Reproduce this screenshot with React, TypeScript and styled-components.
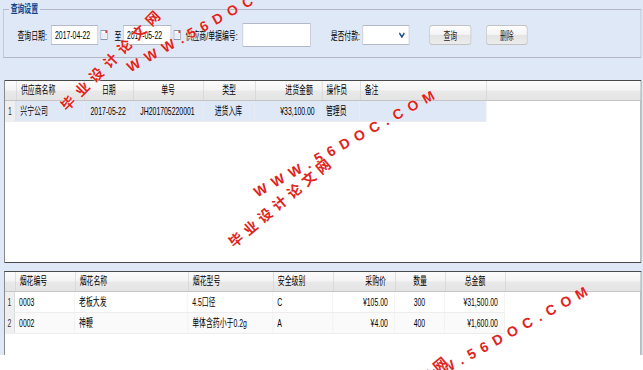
import React from 'react';
import styled, { createGlobalStyle } from 'styled-components';

// the source screenshot is squeezed horizontally, so the page is laid out
// at 1.6x width and squeezed back by the stage transform
const SQUEEZE = 0.625;

type Col = { title: string; w: number; align: 'left' | 'center' | 'right'; hAlign?: 'left' | 'center' | 'right' };

const topCols: Col[] = [
  { title: '供应商名称', w: 109, align: 'left' },
  { title: '日期', w: 78, align: 'center' },
  { title: '单号', w: 112, align: 'center' },
  { title: '类型', w: 83, align: 'center' },
  { title: '进货金额', w: 107, align: 'right' },
  { title: '操作员', w: 61, align: 'left' },
  { title: '备注', w: 202, align: 'left' },
];

const topRows = [['兴宁公司', '2017-05-22', 'JH201705220001', '进货入库', '¥33,100.00', '管理员', '']];

const bottomCols: Col[] = [
  { title: '烟花编号', w: 96, align: 'left' },
  { title: '烟花名称', w: 181, align: 'left' },
  { title: '烟花型号', w: 136, align: 'left' },
  { title: '安全级别', w: 96, align: 'left' },
  { title: '采购价', w: 99, align: 'right' },
  { title: '数量', w: 80, align: 'center' },
  { title: '总金额', w: 96, align: 'right', hAlign: 'center' },
];

const bottomRows = [
  ['0003', '老板大发', '4.5口径', 'C', '¥105.00', '300', '¥31,500.00'],
  ['0002', '神鞭', '单体含药小于0.2g', 'A', '¥4.00', '400', '¥1,600.00'],
];

const GlobalStyle = createGlobalStyle`
  html, body {
    margin: 0;
    padding: 0;
    background: #fff;
    overflow: hidden;
  }
  body {
    font-family: "Liberation Sans", "Noto Sans CJK SC", sans-serif;
    font-size: 11px;
    color: #000;
  }
`;

const Page = styled.div`
  position: relative;
  width: 643px;
  height: 370px;
  overflow: hidden;
`;

const Stage = styled.div`
  width: 1029px;
  height: 355px;
  box-sizing: border-box;
  padding: 3px 3px 0 5px;
  background: #dfe8f6;
  transform: scaleX(${SQUEEZE});
  transform-origin: 0 0;
  display: flex;
  flex-direction: column;
`;

const QueryBox = styled.fieldset`
  margin: 0;
  padding: 8px 0 10px 0;
  min-width: 0;
  border: 1px solid #b5b8c8;
  border-left-width: 1.6px;
  border-right-width: 1.6px;
`;

const Legend = styled.legend`
  margin-left: 8px;
  padding: 0 3px;
  font-size: 11px;
  line-height: 12px;
  font-weight: bold;
  color: #15428b;
`;

const QueryRow = styled.div`
  display: flex;
  align-items: center;
  height: 24px;
  padding-left: 22px;
`;

const Label = styled.span<{ $w: number; $ml?: number }>`
  flex: none;
  width: ${p => p.$w}px;
  margin-left: ${p => p.$ml || 0}px;
  white-space: nowrap;
  color: #000;
`;

const FieldBox = styled.div<{ $w: number; $h?: number }>`
  flex: none;
  box-sizing: border-box;
  width: ${p => p.$w}px;
  height: ${p => p.$h || 20}px;
  background: #fff;
  border: 1px solid #b5b8c8;
  border-left-width: 1.6px;
  border-right-width: 1.6px;
  padding-left: 5px;
  line-height: ${p => (p.$h || 20) - 2}px;
  white-space: nowrap;
  overflow: hidden;
`;

const Trigger = styled.div`
  flex: none;
  width: 18px;
  height: 20px;
  display: flex;
  align-items: center;
  justify-content: center;
`;

const SelectBox = styled(FieldBox)`
  display: flex;
  align-items: center;
  justify-content: flex-end;
  padding-right: 6px;
`;

const Button = styled.button<{ $w: number; $ml: number }>`
  flex: none;
  width: ${p => p.$w}px;
  height: 20px;
  margin-left: ${p => p.$ml}px;
  padding: 0;
  font: inherit;
  color: #222;
  border: 1px solid #c2c2c2;
  border-left-width: 1.6px;
  border-right-width: 1.6px;
  border-radius: 5px / 3px;
  background: linear-gradient(to bottom, #fefefe 0%, #f3f3f3 50%, #e4e4e4 51%, #ececec 100%);
`;

const Grid = styled.div<{ $h?: number }>`
  margin: ${p => (p.$h ? '22px' : '8px')} 0 0 1.5px;
  ${p => (p.$h ? `height: ${p.$h}px;` : 'flex: 1;')}
  box-sizing: border-box;
  background: #fff;
  border: 1px solid #4a4a4a;
  border-left-width: 1.6px;
  border-right-width: 1.6px;
  ${p => (p.$h ? '' : 'border-bottom: none;')}
  display: flex;
  flex-direction: column;
  overflow: hidden;
`;

const HeaderRow = styled.div`
  flex: none;
  display: flex;
  height: 19px;
  border-bottom: 1px solid #c5c5c5;
  background: linear-gradient(to bottom, #fbfbfb 0%, #f4f4f4 48%, #e9e9e9 52%, #e4e4e4 100%);
`;

const HeaderCell = styled.div<{ $w?: number; $align?: string }>`
  ${p => (p.$w ? `width: ${p.$w}px; flex: none;` : 'flex: 1;')}
  box-sizing: border-box;
  padding: 0 ${p => (p.$align === 'right' ? 14 : 7)}px;
  text-align: ${p => p.$align || 'left'};
  line-height: 19px;
  white-space: nowrap;
  overflow: hidden;
  border-right: ${p => (p.$w ? '1.6px solid #d0d0d0' : 'none')};
`;

const NumHeader = styled.div<{ $w: number }>`
  flex: none;
  width: ${p => p.$w}px;
  border-right: 1.6px solid #d0d0d0;
`;

const Row = styled.div<{ $bg: string }>`
  flex: none;
  display: flex;
  align-self: flex-start;
  height: 21px;
  box-sizing: border-box;
  border-bottom: 1px solid #ededed;
  background: ${p => p.$bg};
`;

const NumCell = styled.div<{ $w: number }>`
  flex: none;
  width: ${p => p.$w}px;
  box-sizing: border-box;
  text-align: center;
  line-height: 20px;
  color: #333;
  background: #efefef;
  border-right: 1.6px solid #d0d0d0;
`;

const Cell = styled.div<{ $w: number; $align: string }>`
  flex: none;
  width: ${p => p.$w}px;
  box-sizing: border-box;
  padding: 0 ${p => (p.$align === 'right' ? 10 : 7)}px;
  text-align: ${p => p.$align};
  line-height: 20px;
  white-space: nowrap;
  overflow: hidden;
  border-right: 1.6px solid #ededed;
`;

const Marks = styled.div`
  position: absolute;
  inset: 0;
  pointer-events: none;
`;

const Mark = styled.div<{ $x: number; $y: number; $r: number; $size: number; $sp: number }>`
  position: absolute;
  left: ${p => p.$x}px;
  top: ${p => p.$y}px;
  transform: translate(-50%, -50%) rotate(${p => p.$r}deg);
  white-space: nowrap;
  font-family: "Liberation Sans", "Noto Sans CJK SC", sans-serif;
  font-weight: bold;
  font-size: ${p => p.$size}px;
  letter-spacing: ${p => p.$sp}px;
  color: #e0241c;
  text-shadow: 0 0 1px #fff, 0 0 1px #fff;
`;

const CalendarIcon = () => (
  <svg width="13" height="10" viewBox="0 0 13 10">
    <rect x="1.5" y="0.5" width="10" height="9" fill="#fff" stroke="#8894aa" />
    <rect x="2.5" y="3" width="8" height="5.5" fill="#e8edf5" />
    <rect x="8.5" y="0.5" width="3" height="2.5" fill="#d8453a" />
  </svg>
);

const Chevron = () => (
  <svg width="10" height="6" viewBox="0 0 10 6">
    <path d="M1 1 L5 5 L9 1" fill="none" stroke="#1f4e8c" strokeWidth="2" />
  </svg>
);

const DataGrid = ({ cols, rows, numW, h, rowBg }: { cols: Col[]; rows: string[][]; numW: number; h?: number; rowBg: (i: number) => string }) => (
  <Grid $h={h}>
    <HeaderRow>
      <NumHeader $w={numW} />
      {cols.map(c => (
        <HeaderCell key={c.title} $w={c.w} $align={c.hAlign || c.align}>
          {c.title}
        </HeaderCell>
      ))}
      <HeaderCell />
    </HeaderRow>
    {rows.map((r, i) => (
      <Row key={i} $bg={rowBg(i)}>
        <NumCell $w={numW}>{i + 1}</NumCell>
        {cols.map((c, j) => (
          <Cell key={j} $w={c.w} $align={c.align}>
            {r[j]}
          </Cell>
        ))}
      </Row>
    ))}
  </Grid>
);

const App = () => {
  return (
    <Page>
      <GlobalStyle />
      <Stage>
        <QueryBox>
          <Legend>查询设置</Legend>
          <QueryRow>
            <Label $w={54}>查询日期:</Label>
            <FieldBox $w={75}>2017-04-22</FieldBox>
            <Trigger><CalendarIcon /></Trigger>
            <Label $w={14} $ml={8}>至</Label>
            <FieldBox $w={77}>2017-05-22</FieldBox>
            <Trigger><CalendarIcon /></Trigger>
            <Label $w={91} $ml={5}>供应商/单据编号:</Label>
            <FieldBox $w={109} $h={24} />
            <Label $w={51} $ml={32}>是否付款:</Label>
            <SelectBox $w={75}><Chevron /></SelectBox>
            <Button $w={67} $ml={32}>查询</Button>
            <Button $w={66} $ml={24}>删除</Button>
          </QueryRow>
        </QueryBox>
        <DataGrid cols={topCols} rows={topRows} numW={18} h={183} rowBg={() => '#dfe8f6'} />
        <DataGrid cols={bottomCols} rows={bottomRows} numW={16} rowBg={i => (i % 2 ? '#fafafa' : '#fff')} />
      </Stage>
      <Marks>
        <Mark $x={112} $y={58} $r={-45} $size={14} $sp={6}>毕业设计论文网</Mark>
        <Mark $x={220} $y={17} $r={-29} $size={14} $sp={6.5}>WWW.56DOC.COM</Mark>
        <Mark $x={347} $y={142} $r={-29} $size={14} $sp={6.5}>WWW.56DOC.COM</Mark>
        <Mark $x={281} $y={201} $r={-40} $size={14} $sp={5}>毕业设计论文网</Mark>
        <Mark $x={500} $y={338} $r={-29} $size={14} $sp={6.5}>WWW.56DOC.COM</Mark>
        <Mark $x={398} $y={399} $r={-40} $size={14} $sp={5}>毕业设计论文网</Mark>
      </Marks>
    </Page>
  );
};

export default App;
